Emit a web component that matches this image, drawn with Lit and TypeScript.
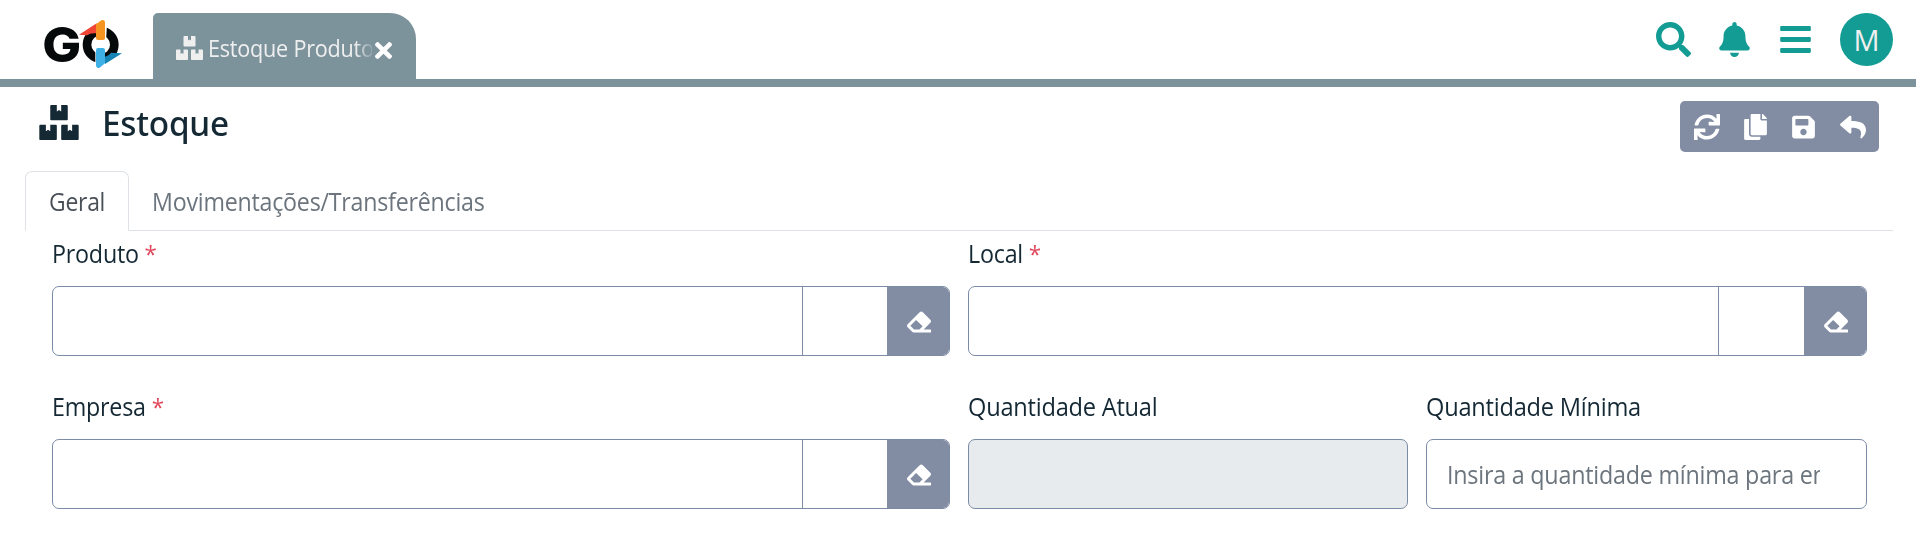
import { LitElement, html, css, svg } from "lit";
import { customElement, property } from "lit/decorators.js";

const ICONS: Record<string, { box: string; d: string }> = {
  boxes: {
    box: "0 0 576 512",
    d: "M560 288h-80v96l-32-21.3-32 21.3v-96h-80c-8.8 0-16 7.2-16 16v192c0 8.8 7.2 16 16 16h224c8.8 0 16-7.2 16-16V304c0-8.8-7.2-16-16-16zm-384-64h224c8.8 0 16-7.2 16-16V16c0-8.8-7.2-16-16-16h-80v96l-32-21.3L256 96V0h-80c-8.8 0-16 7.2-16 16v192c0 8.8 7.2 16 16 16zm64 64h-80v96l-32-21.3L96 384v-96H16c-8.8 0-16 7.2-16 16v192c0 8.8 7.2 16 16 16h224c8.8 0 16-7.2 16-16V304c0-8.8-7.2-16-16-16z",
  },
  search: {
    box: "0 0 512 512",
    d: "M505 442.7L405.3 343c-4.5-4.5-10.6-7-17-7H372c27.6-35.3 44-79.7 44-128C416 93.1 322.9 0 208 0S0 93.1 0 208s93.1 208 208 208c48.3 0 92.7-16.4 128-44v16.3c0 6.4 2.5 12.5 7 17l99.7 99.7c9.4 9.4 24.6 9.4 33.9 0l28.3-28.3c9.4-9.4 9.4-24.6.1-34zM208 336c-70.7 0-128-57.2-128-128 0-70.7 57.2-128 128-128 70.7 0 128 57.2 128 128 0 70.7-57.2 128-128 128z",
  },
  bell: {
    box: "0 0 448 512",
    d: "M224 512c35.32 0 63.97-28.65 63.97-64H160.03c0 35.35 28.65 64 63.97 64zm215.39-149.71c-19.32-20.76-55.47-51.99-55.47-154.29 0-77.7-54.48-139.9-127.94-155.16V32c0-17.67-14.32-32-31.98-32s-31.98 14.33-31.98 32v20.84C118.56 68.1 64.08 130.3 64.08 208c0 102.3-36.15 133.53-55.47 154.29-6 6.45-8.66 14.16-8.61 21.71.11 16.4 12.98 32 32.1 32h383.8c19.12 0 32-15.6 32.1-32 .05-7.55-2.61-15.27-8.61-21.71z",
  },
  bars: {
    box: "0 0 448 512",
    d: "M16 132h416c8.8 0 16-7.2 16-16V76c0-8.8-7.2-16-16-16H16C7.2 60 0 67.2 0 76v40c0 8.8 7.2 16 16 16zm0 160h416c8.8 0 16-7.2 16-16v-40c0-8.8-7.2-16-16-16H16c-8.8 0-16 7.2-16 16v40c0 8.8 7.2 16 16 16zm0 160h416c8.8 0 16-7.2 16-16v-40c0-8.8-7.2-16-16-16H16c-8.8 0-16 7.2-16 16v40c0 8.8 7.2 16 16 16z",
  },
  sync: {
    box: "0 0 512 512",
    d: "M440.65 12.57l4 82.77A247.16 247.16 0 0 0 255.83 8C134.73 8 33.91 94.92 12.29 209.82A12 12 0 0 0 24.09 224h49.05a12 12 0 0 0 11.67-9.26 175.91 175.91 0 0 1 317-56.94l-101.46-4.86a12 12 0 0 0-12.57 12v47.41a12 12 0 0 0 12 12H500a12 12 0 0 0 12-12V12a12 12 0 0 0-12-12h-47.37a12 12 0 0 0-11.98 12.57zM255.83 432a175.61 175.61 0 0 1-146-77.8l101.8 4.87a12 12 0 0 0 12.57-12v-47.4a12 12 0 0 0-12-12H12a12 12 0 0 0-12 12V500a12 12 0 0 0 12 12h47.35a12 12 0 0 0 12-12.6l-4.15-82.57A247.17 247.17 0 0 0 255.83 504c121.11 0 221.93-86.92 243.55-201.82a12 12 0 0 0-11.8-14.18h-49.05a12 12 0 0 0-11.67 9.26A175.86 175.86 0 0 1 255.83 432z",
  },
  copy: {
    box: "0 0 448 512",
    d: "M320 448v40c0 13.255-10.745 24-24 24H24c-13.255 0-24-10.745-24-24V120c0-13.255 10.745-24 24-24h72v296c0 30.879 25.121 56 56 56h168zm0-344V0H152c-13.255 0-24 10.745-24 24v368c0 13.255 10.745 24 24 24h272c13.255 0 24-10.745 24-24V128H344c-13.2 0-24-10.8-24-24zm120.971-31.029L375.029 7.029A24 24 0 0 0 358.059 0H352v96h96v-6.059a24 24 0 0 0-7.029-16.97z",
  },
  save: {
    box: "0 0 448 512",
    d: "M433.941 129.941l-83.882-83.882A48 48 0 0 0 316.118 32H48C21.49 32 0 53.49 0 80v352c0 26.51 21.49 48 48 48h352c26.51 0 48-21.49 48-48V163.882a48 48 0 0 0-14.059-33.941zM224 416c-35.346 0-64-28.654-64-64 0-35.346 28.654-64 64-64s64 28.654 64 64c0 35.346-28.654 64-64 64zm96-304.52V212c0 6.627-5.373 12-12 12H76c-6.627 0-12-5.373-12-12V108c0-6.627 5.373-12 12-12h228.52c3.183 0 6.235 1.264 8.485 3.515l3.48 3.48A11.996 11.996 0 0 1 320 111.48z",
  },
  reply: {
    box: "0 0 512 512",
    d: "M8.309 189.836L184.313 37.851C199.719 24.546 224 35.347 224 56.015v80.053c160.629 1.839 288 34.032 288 186.258 0 61.441-39.581 122.309-83.333 154.132-13.653 9.931-33.111-2.533-28.077-18.631 45.344-145.012-21.507-183.51-176.59-185.742V360c0 20.7-24.3 31.453-39.687 18.164l-176.004-152c-11.071-9.562-11.086-26.753 0-36.328z",
  },
  eraser: {
    box: "0 0 512 512",
    d: "M497.941 273.941c18.745-18.745 18.745-49.137 0-67.882l-160-160c-18.745-18.745-49.136-18.746-67.883 0l-256 256c-18.745 18.745-18.745 49.137 0 67.882l96 96A48.004 48.004 0 0 0 144 480h356c6.627 0 12-5.373 12-12v-40c0-6.627-5.373-12-12-12H355.883l142.058-142.059zm-302.627-62.627l137.373 137.373L265.373 416H150.628l-80-80 124.686-124.686z",
  },
  times: {
    box: "0 80 352 352",
    d: "M242.72 256l100.07-100.07c12.28-12.28 12.28-32.19 0-44.48l-22.24-22.24c-12.28-12.28-32.19-12.28-44.48 0L176 189.28 75.93 89.21c-12.28-12.28-32.19-12.28-44.48 0L9.21 111.45c-12.28 12.28-12.28 32.19 0 44.48L109.28 256 9.21 356.07c-12.28 12.28-12.28 32.19 0 44.48l22.24 22.24c12.28 12.28 32.2 12.28 44.48 0L176 322.72l100.07 100.07c12.28 12.28 32.2 12.28 44.48 0l22.24-22.24c12.28-12.28 12.28-32.19 0-44.48L242.72 256z",
  },
};

const condensed = css`
  .t { display: inline-block; white-space: pre; letter-spacing: -0.25px; transform: scaleX(0.94); transform-origin: 0 50%; }
`;

@customElement("app-icon")
class AppIcon extends LitElement {
  @property() name = "boxes";
  static styles = css`
    :host { display: block; flex: none; }
    svg { display: block; width: 100%; height: 100%; fill: currentColor; }
  `;
  render() {
    const icon = ICONS[this.name];
    return html`<svg viewBox=${icon.box} aria-hidden="true">${svg`<path d=${icon.d}></path>`}</svg>`;
  }
}

@customElement("brand-logo")
class BrandLogo extends LitElement {
  static styles = css`
    :host { display: block; width: 79px; height: 50px; }
    svg { display: block; width: 100%; height: 100%; overflow: visible; }
    .g { font: 800 146px Inter, "Open Sans", sans-serif; fill: #05090a; }
  `;
  render() {
    return html`<svg viewBox="132 57 237 150" role="img" aria-label="GO">
      <text class="g" x="127" y="186" textLength="117" lengthAdjust="spacingAndGlyphs">G</text>
      <circle cx="302" cy="134" r="41" fill="none" stroke="#05090a" stroke-width="26"></circle>
      <path d="M288 57H322L318 124H288zM286 143H314V207H286z" fill="#fff"></path>
      <path d="M237 104L290 70V100Q270 98 262 106z" fill="#ee4535"></path>
      <path d="M288 73L304 61Q315 57 315 69V114Q315 120 309 120H294Q288 120 288 114z" fill="#f69421"></path>
      <path d="M366 160L315 192V170Q328 167 333 158z" fill="#1683b5"></path>
      <path d="M288 151Q288 144 294 144H309Q315 144 315 151V190L299 203Q288 207 288 196z" fill="#3fb0e6"></path>
    </svg>`;
  }
}

@customElement("lookup-field")
class LookupField extends LitElement {
  @property() label = "";
  static styles = [condensed, css`
    :host { display: block; }
    .label { height: 46px; line-height: 26px; white-space: nowrap; }
    .t { transform: scaleX(0.932); }
    .req { color: #e0465c; font-size: 24px; }
    .group { display: flex; height: 70px; box-sizing: border-box; border: 1px solid #7c8ba6; border-radius: 7px; overflow: hidden; }
    .main { flex: 1; border-right: 1px solid #7c8ba6; }
    .code { width: 84px; }
    :host(.wide) .code { width: 85px; }
    .clear { width: 62px; display: grid; place-items: center; background: #828da4; color: #fff; }
    app-icon { width: 24px; height: 24px; margin: 1px 0 0 2px; }
  `];
  render() {
    return html`
      <div class="label"><span class="t">${this.label} <span class="req">*</span></span></div>
      <div class="group">
        <div class="main"></div>
        <div class="code"></div>
        <div class="clear"><app-icon name="eraser"></app-icon></div>
      </div>`;
  }
}

@customElement("app-root")
class AppRoot extends LitElement {
  static styles = [condensed, css`
    :host {
      display: block; height: 546px; overflow: hidden; background: #fff; color: #152935;
      font: 400 25px "Open Sans", "Noto Sans", sans-serif;
    }
    .top { display: flex; height: 87px; box-sizing: border-box; border-bottom: 8px solid #7d939c; padding-right: 23px; }
    brand-logo { margin: 19px 30px 0 44px; }
    .page-tab {
      display: flex; align-items: center; width: 263px; height: 66px; margin-top: 13px; box-sizing: border-box;
      padding: 4px 24px 0 23px; border-radius: 5px 26px 0 0; background: #7d939c; color: #efefef;
    }
    .page-tab .kind { width: 27px; height: 24px; }
    .page-tab .name {
      width: 165px; margin-left: 5px; font-size: 23px; white-space: nowrap; overflow: hidden;
      -webkit-mask-image: linear-gradient(90deg, #000 147px, transparent 167px);
    }
    .page-tab .close { width: 17px; height: 17px; margin: 5px 0 0 3px; color: #fff; }
    .tools { display: flex; margin-left: auto; color: #139c94; }
    .search { width: 35px; height: 35px; margin: 22px 28px 0 0; }
    .bell { width: 31px; height: 35px; margin: 22px 30px 0 0; }
    .bars { width: 31px; height: 35px; margin: 22px 29px 0 0; }
    .avatar {
      width: 53px; height: 53px; margin-top: 13px; border-radius: 50%; background: #139c94; color: #efefef;
      display: grid; place-items: center; font-size: 29px; line-height: 53px;
    }
    .heading { display: flex; height: 84px; padding: 0 37px 0 39px; }
    .heading .kind { width: 40px; height: 35px; margin-top: 18px; }
    h1 { margin: 13px 0 0 23px; font: 500 34px/46px "Noto Sans", sans-serif; }
    h1 .t { transform: scaleX(0.98); }
    .actions {
      display: flex; align-items: center; height: 51px; margin: 14px 0 0 auto; width: 199px; box-sizing: border-box;
      padding-left: 14px; background: #828da4; color: #fff; border-radius: 5px;
    }
    .actions app-icon { height: 26px; }
    .sync { width: 26px; margin-right: 24px; }
    .copy { width: 23px; margin-right: 25px; }
    .save { width: 23px; margin-right: 25px; }
    .reply { width: 26px; }
    .tabs { display: flex; height: 60px; margin: 0 23px 0 25px; box-sizing: border-box; border-bottom: 1px solid #dee2e6; color: #6c757d; }
    .tab { padding: 0 23px; line-height: 61px; }
    .tab .t { transform: scaleX(0.929); }
    .tab.active {
      width: 104px; height: 60px; padding: 0 0 0 23px; box-sizing: border-box; border: 1px solid #dee2e6; border-bottom-color: #fff;
      border-radius: 7px 7px 0 0; background: #fff; color: #495057; line-height: 59px;
    }
    .tab.active .t { transform: scaleX(0.915); }
    .form { display: grid; grid-template-columns: 898px 440px minmax(0, 1fr); column-gap: 18px; row-gap: 37px; padding: 9px 49px 0 52px; }
    .wide { grid-column: span 2; }
    .label { height: 46px; line-height: 26px; white-space: nowrap; }
    .label .t { transform: scaleX(0.945); }
    .input { height: 70px; box-sizing: border-box; border: 1px solid #7c8ba6; border-radius: 7px; padding: 0 46px 0 20px; }
    .readonly { background: #e7ebee; }
    .placeholder { overflow: hidden; white-space: nowrap; line-height: 69px; color: #6c757d; }
    .placeholder .t { transform: scaleX(0.933); }
  `];
  render() {
    return html`
      <header class="top">
        <brand-logo></brand-logo>
        <div class="page-tab">
          <app-icon class="kind" name="boxes"></app-icon>
          <span class="name"><span class="t">Estoque Produto</span></span>
          <app-icon class="close" name="times"></app-icon>
        </div>
        <div class="tools">
          <app-icon class="search" name="search"></app-icon>
          <app-icon class="bell" name="bell"></app-icon>
          <app-icon class="bars" name="bars"></app-icon>
          <div class="avatar">M</div>
        </div>
      </header>
      <section class="heading">
        <app-icon class="kind" name="boxes"></app-icon>
        <h1><span class="t">Estoque</span></h1>
        <div class="actions">
          ${["sync", "copy", "save", "reply"].map((n) => html`<app-icon class=${n} name=${n}></app-icon>`)}
        </div>
      </section>
      <nav class="tabs">
        <div class="tab active"><span class="t">Geral</span></div>
        <div class="tab"><span class="t">Movimentações/Transferências</span></div>
      </nav>
      <main class="form">
        <lookup-field label="Produto"></lookup-field>
        <lookup-field class="wide" label="Local"></lookup-field>
        <lookup-field label="Empresa"></lookup-field>
        <div>
          <div class="label"><span class="t">Quantidade Atual</span></div>
          <div class="input readonly"></div>
        </div>
        <div>
          <div class="label"><span class="t">Quantidade Mínima</span></div>
          <div class="input"><div class="placeholder"><span class="t">Insira a quantidade mínima para entrada</span></div></div>
        </div>
      </main>`;
  }
}
